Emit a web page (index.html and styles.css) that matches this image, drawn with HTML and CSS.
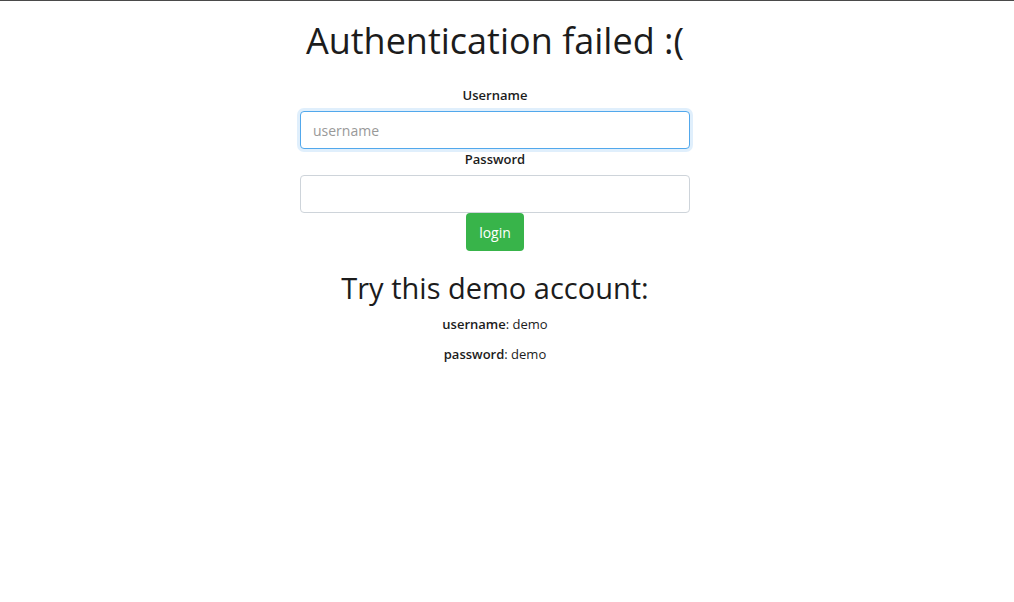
FILE: index.html
```
<!DOCTYPE html>
<html lang="en">
<head>
  <meta charset="UTF-8">
  <title>Login</title>
  <link rel="stylesheet" href="styles.css">
</head>
<body>

  <div class="page">
    <h1>Authentication failed :(</h1>

    <!-- LOGIN FORM -->
    <form class="login-form">
      <label for="username">Username</label>
      <input type="text" id="username" class="field focused" placeholder="username">
      <label for="password">Password</label>
      <input type="password" id="password" class="field">
      <button type="button" class="btn-login">login</button>
    </form>

    <!-- DEMO ACCOUNT -->
    <h2>Try this demo account:</h2>
    <p><b>username</b>: demo</p>
    <p><b>password</b>: demo</p>
  </div>

</body>
</html>
```
FILE: styles.css
```
body {
  margin: 0;
  border-top: 1px solid #4a4a4a;
  font-family: 'Open Sans', 'Noto Sans', sans-serif;
  color: #1c1c1c;
  background: #fff;
}
.page {
  width: 390px;
  margin: 0 auto;
  padding-right: 24px;
  text-align: center;
}
h1 {
  font-size: 36px;
  font-weight: 400;
  margin: 0;
  padding-top: 18px;
  line-height: 1.2;
}
h2 {
  font-size: 29px;
  font-weight: 400;
  margin: 20px 0 8px;
  line-height: 1.2;
}
.login-form {
  margin-top: 23px;
  display: flex;
  flex-direction: column;
  align-items: center;
}
.login-form label {
  font-size: 13px;
  font-weight: 600;
  line-height: 20px;
  margin-bottom: 6px;
}
.field {
  box-sizing: border-box;
  width: 100%;
  height: 38px;
  padding: 6px 12px;
  font-family: inherit;
  font-size: 14px;
  color: #495057;
  border: 1px solid #ced4da;
  border-radius: 4px;
  outline: none;
}
.field::placeholder {
  color: #999;
}
.focused {
  border-color: #52a8ec;
  box-shadow: 0 0 0 3px rgba(82, 168, 236, 0.18);
}
.btn-login {
  height: 38px;
  padding: 0 13px;
  font-family: inherit;
  font-size: 14px;
  color: #fff;
  background-color: #38b44a;
  border: none;
  border-radius: 4px;
  cursor: pointer;
}
p {
  font-size: 13px;
  line-height: 20px;
  margin: 0 0 10px;
}
p b {
  font-weight: 600;
}
```
